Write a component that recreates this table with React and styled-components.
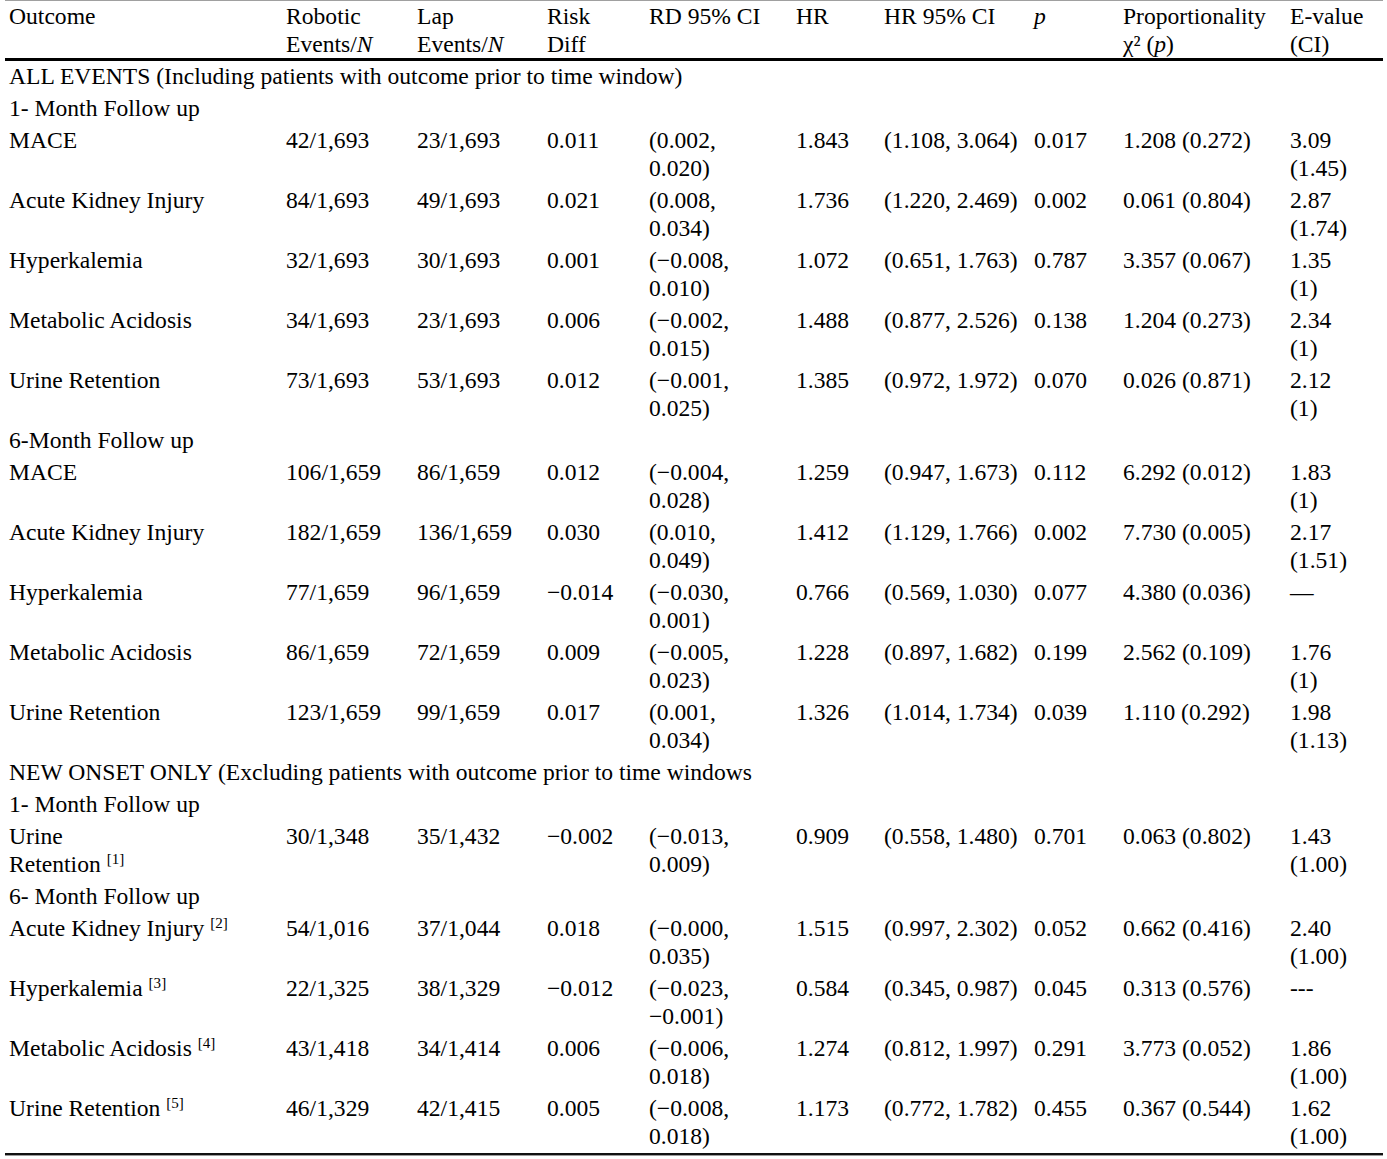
import React from "react";
import styled, { createGlobalStyle } from "styled-components";

const Global = createGlobalStyle`
  html, body { margin: 0; padding: 0; background: #fff; }
  body { font-family: "Liberation Serif", "Times New Roman", serif; color: #000; }
`;

const Wrap = styled.div`
  margin-left: 5px;
  width: 1378px;
  border-bottom: 1px solid #9a9a9a;
`;

const Table = styled.table`
  width: 100%;
  table-layout: fixed;
  border-collapse: collapse;
  font-size: 23.6px;
  line-height: 28px;
  border-top: 1px solid #a0a0a0;
  border-bottom: 2px solid #111;
`;

const Th = styled.th`
  font-weight: normal;
  text-align: left;
  vertical-align: top;
  white-space: nowrap;
  padding: 1px 4px 0 4px;
  border-bottom: 3px solid #000;
`;

const Td = styled.td`
  text-align: left;
  vertical-align: top;
  padding: 1px ${(p) => p.$pr || 4}px 3px 4px;
`;

const SectionCell = styled.td`
  padding: 1px 4px 3px 4px;
  white-space: nowrap;
`;

const Sup = styled.sup`
  font-size: 0.64em;
  line-height: 0;
  vertical-align: 0.55em;
`;

const widths = [277, 131, 130, 102, 147, 88, 150, 89, 167, 97];
const rightPad = { 4: 35, 9: 24 };

const rows = [
  { s: "ALL EVENTS (Including patients with outcome prior to time window)" },
  { s: "1- Month Follow up" },
  ["MACE", "42/1,693", "23/1,693", "0.011", "(0.002, 0.020)", "1.843", "(1.108, 3.064)", "0.017", "1.208 (0.272)", "3.09 (1.45)"],
  ["Acute Kidney Injury", "84/1,693", "49/1,693", "0.021", "(0.008, 0.034)", "1.736", "(1.220, 2.469)", "0.002", "0.061 (0.804)", "2.87 (1.74)"],
  ["Hyperkalemia", "32/1,693", "30/1,693", "0.001", "(\u22120.008, 0.010)", "1.072", "(0.651, 1.763)", "0.787", "3.357 (0.067)", "1.35 (1)"],
  ["Metabolic Acidosis", "34/1,693", "23/1,693", "0.006", "(\u22120.002, 0.015)", "1.488", "(0.877, 2.526)", "0.138", "1.204 (0.273)", "2.34 (1)"],
  ["Urine Retention", "73/1,693", "53/1,693", "0.012", "(\u22120.001, 0.025)", "1.385", "(0.972, 1.972)", "0.070", "0.026 (0.871)", "2.12 (1)"],
  { s: "6-Month Follow up" },
  ["MACE", "106/1,659", "86/1,659", "0.012", "(\u22120.004, 0.028)", "1.259", "(0.947, 1.673)", "0.112", "6.292 (0.012)", "1.83 (1)"],
  ["Acute Kidney Injury", "182/1,659", "136/1,659", "0.030", "(0.010, 0.049)", "1.412", "(1.129, 1.766)", "0.002", "7.730 (0.005)", "2.17 (1.51)"],
  ["Hyperkalemia", "77/1,659", "96/1,659", "\u22120.014", "(\u22120.030, 0.001)", "0.766", "(0.569, 1.030)", "0.077", "4.380 (0.036)", "\u2014"],
  ["Metabolic Acidosis", "86/1,659", "72/1,659", "0.009", "(\u22120.005, 0.023)", "1.228", "(0.897, 1.682)", "0.199", "2.562 (0.109)", "1.76 (1)"],
  ["Urine Retention", "123/1,659", "99/1,659", "0.017", "(0.001, 0.034)", "1.326", "(1.014, 1.734)", "0.039", "1.110 (0.292)", "1.98 (1.13)"],
  { s: "NEW ONSET ONLY (Excluding patients with outcome prior to time windows" },
  { s: "1- Month Follow up" },
  [{ t: "Urine", t2: "Retention", n: 1 }, "30/1,348", "35/1,432", "\u22120.002", "(\u22120.013, 0.009)", "0.909", "(0.558, 1.480)", "0.701", "0.063 (0.802)", "1.43 (1.00)"],
  { s: "6- Month Follow up" },
  [{ t: "Acute Kidney Injury", n: 2 }, "54/1,016", "37/1,044", "0.018", "(\u22120.000, 0.035)", "1.515", "(0.997, 2.302)", "0.052", "0.662 (0.416)", "2.40 (1.00)"],
  [{ t: "Hyperkalemia", n: 3 }, "22/1,325", "38/1,329", "\u22120.012", "(\u22120.023, \u22120.001)", "0.584", "(0.345, 0.987)", "0.045", "0.313 (0.576)", "---"],
  [{ t: "Metabolic Acidosis", n: 4 }, "43/1,418", "34/1,414", "0.006", "(\u22120.006, 0.018)", "1.274", "(0.812, 1.997)", "0.291", "3.773 (0.052)", "1.86 (1.00)"],
  [{ t: "Urine Retention", n: 5 }, "46/1,329", "42/1,415", "0.005", "(\u22120.008, 0.018)", "1.173", "(0.772, 1.782)", "0.455", "0.367 (0.544)", "1.62 (1.00)"],
];

function OutcomeLabel({ v }) {
  if (typeof v === "string") return v;
  return (
    <>
      {v.t}
      {v.t2 ? (
        <>
          <br />
          {v.t2}
        </>
      ) : null}{" "}
      <Sup>[{v.n}]</Sup>
    </>
  );
}

export default function App() {
  return (
    <>
      <Global />
      <Wrap>
        <Table>
          <colgroup>
            {widths.map((w, i) => (
              <col key={i} style={{ width: w }} />
            ))}
          </colgroup>
          <thead>
            <tr>
              <Th>Outcome</Th>
              <Th>
                Robotic
                <br />
                Events/<i>N</i>
              </Th>
              <Th>
                Lap
                <br />
                Events/<i>N</i>
              </Th>
              <Th>
                Risk
                <br />
                Diff
              </Th>
              <Th>RD 95% CI</Th>
              <Th>HR</Th>
              <Th>HR 95% CI</Th>
              <Th>
                <i>p</i>
              </Th>
              <Th>
                Proportionality
                <br />
                χ² (<i>p</i>)
              </Th>
              <Th>
                E-value
                <br />
                (CI)
              </Th>
            </tr>
          </thead>
          <tbody>
            {rows.map((r, i) =>
              r.s ? (
                <tr key={i}>
                  <SectionCell colSpan={10}>{r.s}</SectionCell>
                </tr>
              ) : (
                <tr key={i}>
                  {r.map((c, j) => (
                    <Td key={j} $pr={rightPad[j] || 4}>
                      {j === 0 ? <OutcomeLabel v={c} /> : c}
                    </Td>
                  ))}
                </tr>
              )
            )}
          </tbody>
        </Table>
      </Wrap>
    </>
  );
}
